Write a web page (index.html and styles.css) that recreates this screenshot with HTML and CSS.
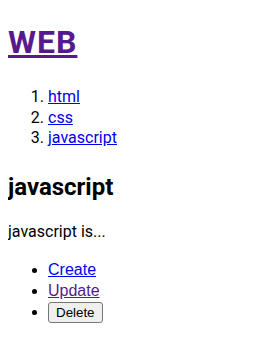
FILE: index.html
```html
<!DOCTYPE html>
<html lang="ko">
<head>
    <meta charset="UTF-8">
    <meta name="viewport" content="width=device-width, initial-scale=1.0">
    <title>WEB - javascript</title>
    <link rel="stylesheet" href="styles.css">
</head>
<body>

    <h1><a href="#" class="visited">WEB</a></h1>
    <ol>
        <li><a href="#">html</a></li>
        <li><a href="#">css</a></li>
        <li><a href="#">javascript</a></li>
    </ol>

    <h2>javascript</h2>
    <p>javascript is...</p>

    <ul class="control">
        <li><a href="#">Create</a></li>
        <li><a href="#" class="visited">Update</a></li>
        <li>
            <form>
                <button type="button" class="delete">Delete</button>
            </form>
        </li>
    </ul>

</body>
</html>
```

FILE: styles.css
```css
/* Global Styles */
body {
    font-family: Roboto, "Noto Sans", "Noto Sans CJK KR", sans-serif;
    line-height: 20.5px;
    margin: 8px;
    background-color: #fff;
    color: #000;
}

a {
    color: #0000ee;
}

a.visited {
    color: #551a8b;
}

/* Headings */
h1 {
    font-size: 32px;
    line-height: 37.5px;
    letter-spacing: 1px;
    margin: 16px 0 25.5px;
}

h2 {
    font-size: 24px;
    line-height: 30px;
    margin: 23px 0 0;
}

p {
    margin: 20.5px 0 0;
}

ol {
    margin: 0;
    padding-left: 40px;
}

/* Create / Update / Delete */
.control {
    font-family: Arial, "Liberation Sans", sans-serif;
    line-height: 21px;
    margin: 16.5px 0 0;
    padding-left: 40px;
}

form {
    margin: 0;
}

.delete {
    font-family: Arial, "Liberation Sans", sans-serif;
    font-size: 13.33px;
    line-height: 15px;
    padding: 2px 7px;
    border: 1px solid #767676;
    border-radius: 3px;
    background-color: #efefef;
    color: #000;
}
```
